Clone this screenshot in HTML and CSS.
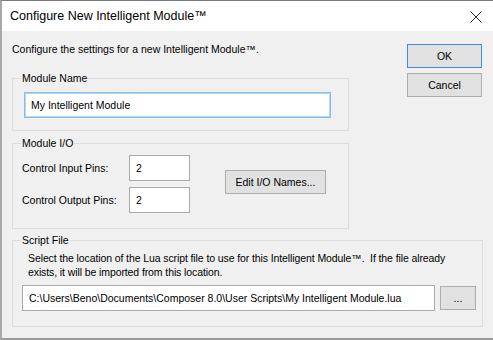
FILE: index.html
```html
<!DOCTYPE html>
<html lang="en">
<head>
    <meta charset="UTF-8">
    <title>Configure New Intelligent Module™</title>
    <link rel="stylesheet" href="styles.css">
</head>
<body>

<div class="dialog">
    <!-- Title bar -->
    <div class="titlebar">
        <span class="title">Configure New Intelligent Module™</span>
        <svg class="close" width="12" height="12" viewBox="0 0 12 12">
            <path d="M0.5 0.5 L11.5 11.5 M11.5 0.5 L0.5 11.5" stroke="#2b2b2b" stroke-width="1" fill="none"/>
        </svg>
    </div>

    <div class="content">
        <div class="top">
            <div class="main">
                <p class="intro">Configure the settings for a new Intelligent Module™.</p>

                <!-- Module Name -->
                <fieldset class="group group-name">
                    <legend>Module Name</legend>
                    <input class="textbox focused name-box" type="text" value="My Intelligent Module">
                </fieldset>

                <!-- Module I/O -->
                <fieldset class="group group-io">
                    <legend>Module I/O</legend>
                    <div class="io">
                        <div class="pins">
                            <div class="pin-row">
                                <label>Control Input Pins:</label>
                                <input class="textbox pin-box" type="text" value="2">
                            </div>
                            <div class="pin-row">
                                <label>Control Output Pins:</label>
                                <input class="textbox pin-box" type="text" value="2">
                            </div>
                        </div>
                        <button class="btn edit-btn">Edit I/O Names...</button>
                    </div>
                </fieldset>
            </div>

            <div class="actions">
                <button class="btn default">OK</button>
                <button class="btn">Cancel</button>
            </div>
        </div>

        <!-- Script File -->
        <fieldset class="group group-script">
            <legend>Script File</legend>
            <p class="hint">Select the location of the Lua script file to use for this Intelligent Module™.&nbsp; If the file already<br>exists, it will be imported from this location.</p>
            <div class="path-row">
                <input class="textbox path-box" type="text" value="C:\Users\Beno\Documents\Composer 8.0\User Scripts\My Intelligent Module.lua">
                <button class="btn browse-btn">...</button>
            </div>
        </fieldset>
    </div>
</div>

</body>
</html>
```

FILE: styles.css
```css
/* Basic Reset */
* {
    margin: 0;
    padding: 0;
    box-sizing: border-box;
}
body {
    font-family: "Liberation Sans", Arial, sans-serif;
    font-size: 10.5px;
    color: #000;
    background: #f0f0f0;
    width: 493px;
    height: 340px;
    overflow: hidden;
}
/* Buttons */
.btn {
    height: 24px;
    width: 75px;
    background: #e1e1e1;
    border: 1px solid #adadad;
    font: inherit;
    color: #000;
    cursor: pointer;
    white-space: nowrap;
}
.btn.default {
    border-color: #3c8ee0;
}
.btn:hover {
    background: #e5f1fb;
    border-color: #0078d7;
}
/* Window */
.dialog {
    height: 340px;
    background: #f0f0f0;
    border-top: 1px solid #7a7a7a;
    border-left: 2px solid #a8a8a8;
    border-bottom: 2px solid #9a9a9a;
}
.titlebar {
    height: 30px;
    background: #fff;
    display: flex;
    align-items: center;
    justify-content: space-between;
    padding: 0 11px 0 8px;
}
.title {
    font-size: 12.5px;
    color: #000;
}
.close {
    display: block;
    margin-top: 1px;
}
/* Content */
.content {
    padding: 10px 10px 0 10px;
}
.top {
    display: flex;
    justify-content: space-between;
}
.main {
    width: 337px;
}
.intro {
    line-height: 16px;
}
.actions {
    display: flex;
    flex-direction: column;
    gap: 5px;
    margin-top: 3px;
    margin-right: 1px;
}
/* Group boxes */
.group {
    border: 1px solid #dcdcdc;
    padding: 6px 17px 12px 9px;
    min-width: 0;
}
.group legend {
    line-height: 16px;
    padding: 0 1px;
    margin-left: -1px;
}
.group-name {
    margin-top: 13px;
}
.group-io {
    margin-top: 4px;
    padding-top: 4px;
    padding-bottom: 15px;
}
.group-script {
    margin-top: 3px;
    padding: 3px 6px 15px 9px;
}
/* Text boxes */
.textbox {
    display: block;
    height: 26px;
    border: 1px solid #ababab;
    background: #fff;
    font: inherit;
    color: #000;
    padding: 0 6px;
    outline: none;
}
.textbox.focused {
    border-color: #86bdeb;
    box-shadow: inset 0 0 0 1px #b6d7f3;
}
.name-box {
    width: 307px;
    margin-left: 2px;
}
/* Module I/O */
.io {
    display: flex;
    align-items: center;
}
.pins {
    display: flex;
    flex-direction: column;
    gap: 6px;
}
.pin-row {
    display: flex;
    align-items: center;
}
.pin-row label {
    width: 107px;
}
.pin-box {
    width: 61px;
}
.edit-btn {
    margin-left: 35px;
    margin-top: -5px;
    width: 101px;
}
/* Script file */
.hint {
    line-height: 14px;
    padding-left: 6px;
    white-space: nowrap;
    letter-spacing: -0.1px;
}
.path-row {
    display: flex;
    align-items: center;
    margin-top: 6px;
}
.path-box {
    width: 413px;
    flex-shrink: 0;
}
.browse-btn {
    width: 36px;
    margin-left: 5px;
}
```
